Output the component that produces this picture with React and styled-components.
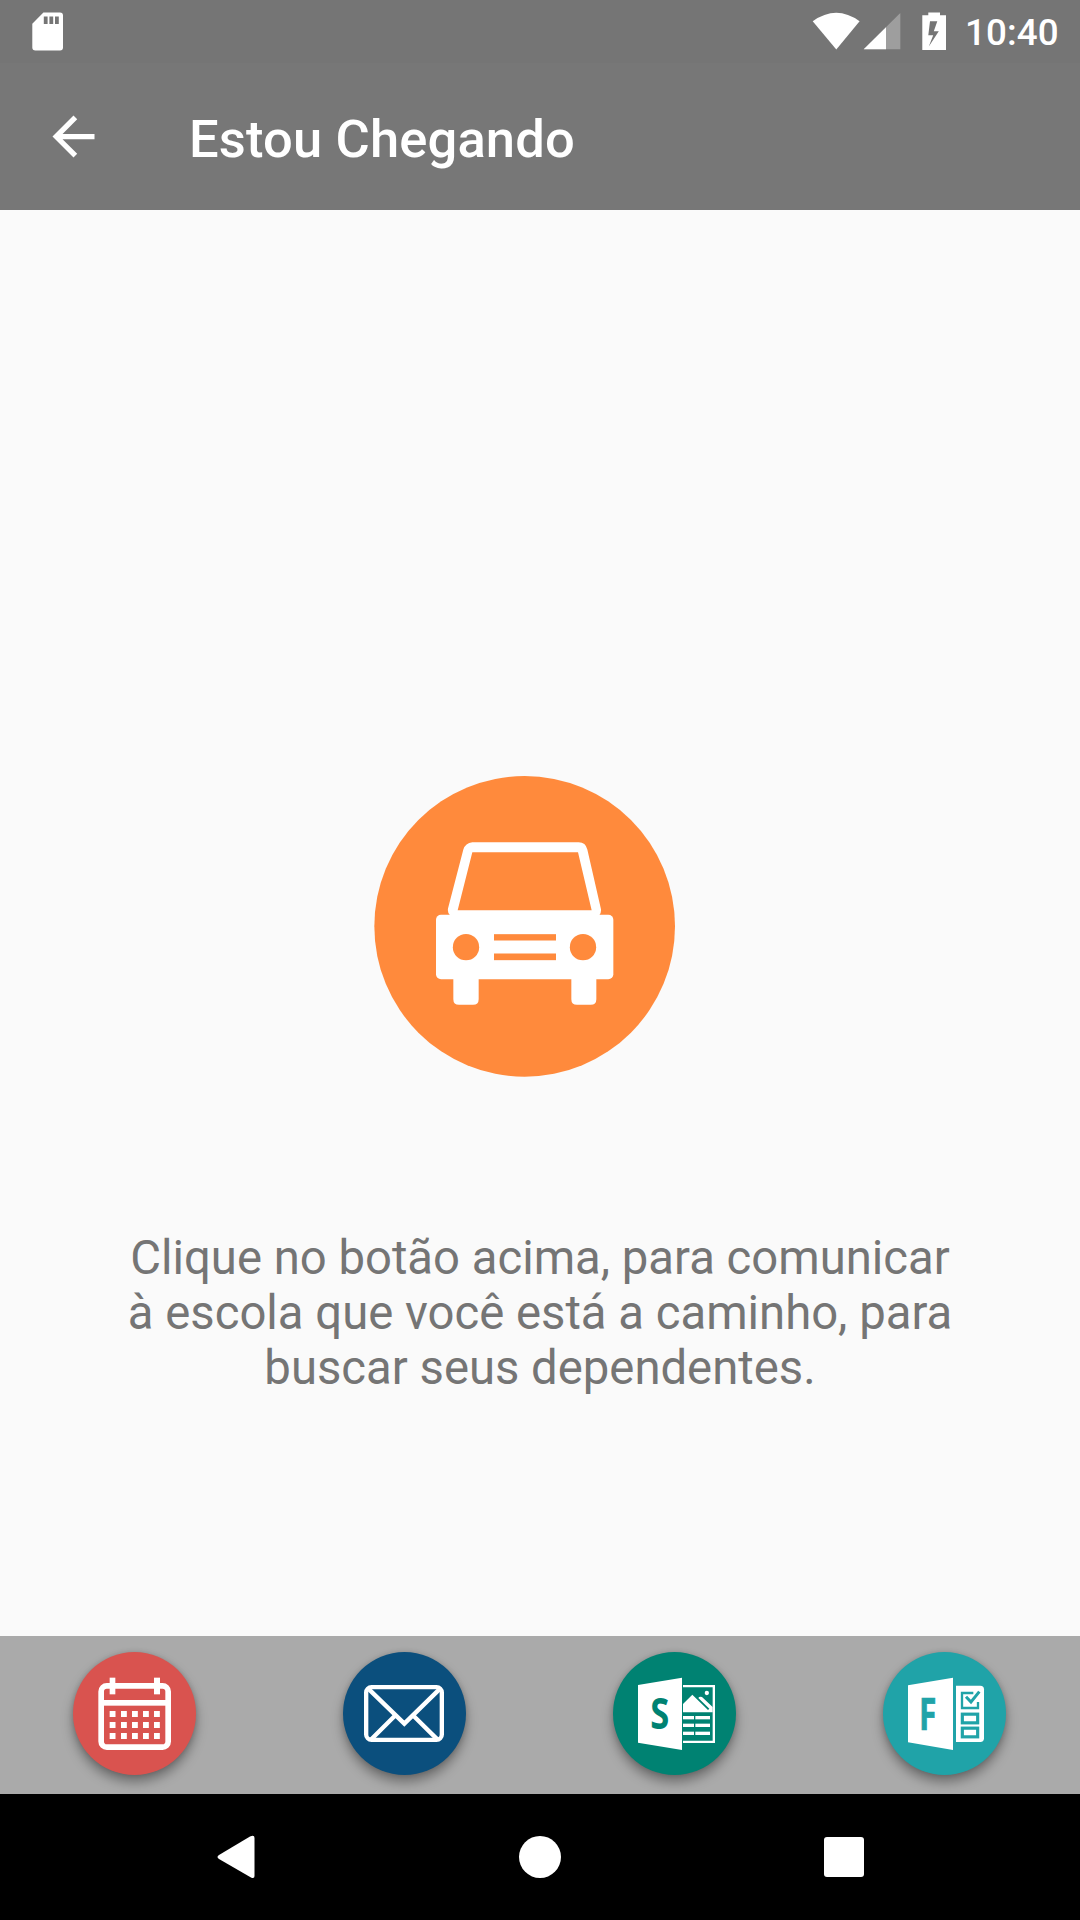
import React from "react";
import styled, { createGlobalStyle } from "styled-components";

const GlobalStyle = createGlobalStyle`
  * { box-sizing: border-box; }
  body {
    margin: 0;
    background: #fafafa;
    font-family: Roboto, "Noto Sans", sans-serif;
  }
  button {
    border: 0;
    padding: 0;
    background: none;
    font: inherit;
    cursor: pointer;
  }
  svg { display: block; flex: none; }
`;

const Screen = styled.div`
  display: flex;
  flex-direction: column;
  width: 1080px;
  height: 1920px;
  overflow: hidden;
  background: #fafafa;
`;

const StatusBar = styled.div`
  display: flex;
  justify-content: space-between;
  height: 63px;
  padding: 0 21px 0 32px;
  background: #757575;
`;

const StatusGroup = styled.div`
  display: flex;
  gap: 1px;
`;

const Clock = styled.time`
  width: 94px;
  padding-top: 11px;
  color: #fff;
  font-size: 36.75px;
  line-height: 43px;
  font-weight: 500;
  letter-spacing: 0.1px;
  white-space: nowrap;
`;

const Toolbar = styled.header`
  display: flex;
  align-items: center;
  gap: 84px;
  height: 147px;
  padding-left: 42px;
  background: #777;
`;

const Title = styled.h1`
  margin: 0;
  padding-top: 4px;
  color: #fff;
  font-size: 52.5px;
  line-height: 62px;
  font-weight: 500;
  letter-spacing: 0.15px;
  white-space: nowrap;
`;

const Content = styled.main`
  display: flex;
  flex: 1;
  flex-direction: column;
  align-items: center;
  padding-top: 566px;
`;

const CarButton = styled.button`
  width: 302px;
  height: 301px;
  margin-right: 30px;
`;

const Message = styled.p`
  width: 862px;
  margin: 154px 0 0;
  color: #757575;
  font-size: 47.25px;
  line-height: 55px;
  text-align: center;
`;

const Shortcuts = styled.nav`
  display: grid;
  grid-template-columns: repeat(4, 270px);
  justify-items: center;
  height: 158px;
  padding: 16px 0 0;
  background: #aaa;
  overflow: hidden;
`;

const ShortcutButton = styled.button`
  width: 123px;
  height: 123px;
  margin-right: 1px;
  border-radius: 50%;
  background: ${(p) => p.$color};
  box-shadow: 0 7px 12px rgba(0, 0, 0, 0.36), 0 0 5px rgba(0, 0, 0, 0.14);
`;

const NavigationBar = styled.div`
  display: flex;
  justify-content: center;
  gap: 262px;
  height: 126px;
  background: #000;
`;

const NavButton = styled.button`
  width: 42px;
  height: 126px;
  display: flex;
  align-items: center;
`;

const SdCard = () => (
  <svg width="32" height="63" viewBox="0 0 32 63" fill="#fff">
    <path fillRule="evenodd" d="M11.4 12.6H28Q31 12.6 31 15.6V47.6Q31 50.6 28 50.6H3.4Q.3 50.6 .3 47.6V23.8ZM11.8 16.6V24H15.6V16.6ZM17.4 16.6V24H21.2V16.6ZM23 16.6V24H26.8V16.6Z" />
  </svg>
);

const StatusIcons = () => (
  <svg width="152" height="63" viewBox="812 0 152 63" fill="#fff">
    <path d="M812.7 21.3Q836.3 4.3 859.6 21.3L836.3 49.6Z" />
    <path d="M900.3 13V49.3H863.7Z" opacity=".3" />
    <path d="M886 27.2V49.3H863.7Z" />
    <path fillRule="evenodd" d="M928.3 12.4H940V15.3H946V50H922.3V15.3H928.3ZM930 21.3L928.3 35.2H933.2L928.8 46.4L938.8 31.2H933.8L937.3 21.3Z" />
  </svg>
);

const BackArrow = () => (
  <svg width="63" height="63" viewBox="0 0 24 24" fill="#fff">
    <path d="M20 11H7.83l5.59-5.59L12 4l-8 8 8 8 1.41-1.41L7.83 13H20v-2z" />
  </svg>
);

const Car = () => (
  <svg width="302" height="301" viewBox="42 47.500 906 903">
    <circle cx="494" cy="498.500" r="451" fill="#ff8a3c" />
    <g fill="#fff">
      <path fillRule="evenodd" d="M337 246H656Q677 246 682 268L723 447Q724 458 718 465H270Q262 458 264 445L310 268Q316 248 337 246ZM337 276L293 450H695L654 276Z" />
      <rect x="228" y="464" width="532" height="193" rx="15" />
      <path d="M280 650H356V717Q356 734 339 734H297Q280 734 280 717ZM634 650H709V717Q709 734 692 734H651Q634 734 634 717Z" />
    </g>
    <g fill="#ff8a3c">
      <circle cx="318" cy="561" r="39.500" />
      <circle cx="669" cy="561" r="39.500" />
      <rect x="402" y="522" width="186" height="19" />
      <rect x="402" y="580" width="186" height="20" />
    </g>
  </svg>
);

const GlyphFrame = ({ children }) => (
  <svg width="123" height="123" viewBox="39 81 369 369">{children}</svg>
);

const CalendarGlyph = () => (
  <GlyphFrame>
    <rect x="123.500" y="182.500" width="201" height="184" rx="17" fill="none" stroke="#fff" strokeWidth="17" />
    <g fill="#fff">
      <rect x="125" y="225" width="200" height="17" />
      <rect x="149" y="158" width="17" height="50" />
      <rect x="282" y="158" width="18" height="50" />
      {[258, 291, 324].map((y) =>
        [149, 183, 216, 249, 282].map((x) => (
          <rect key={`${x}-${y}`} x={x} y={y} width="17.500" height="18" />
        ))
      )}
    </g>
  </GlyphFrame>
);

const MailGlyph = () => (
  <GlyphFrame>
    <g fill="none" stroke="#fff" strokeWidth="13">
      <rect x="108.500" y="186.500" width="227" height="158" rx="16" />
      <path d="M117 193L223 296L328 193M194 273L124 343M251 273L322 343" />
    </g>
  </GlyphFrame>
);

const StudyGlyph = () => (
  <GlyphFrame>
    <path d="M114 180L246 158V375L114 353Z" fill="#fff" />
    <text transform="translate(151 313) scale(.79 1)" fill="#008272" fontFamily="Open Sans, sans-serif" fontWeight="700" fontSize="131">S</text>
    <path d="M249 183.500H341.500V350.500H249" fill="none" stroke="#fff" strokeWidth="7" />
    <g fill="#fff">
      <circle cx="320.500" cy="204" r="6.500" />
      <path d="M249 237L277 209L324 255L328 251L295 219Q298 213 306 216L338 246V262H249Z" />
      {[273, 296, 320].map((y) => (
        <React.Fragment key={y}>
          <rect x="249" y={y} width="33" height="10" />
          <rect x="286" y={y} width="44" height="10" />
        </React.Fragment>
      ))}
    </g>
  </GlyphFrame>
);

const FormGlyph = () => (
  <GlyphFrame>
    <path d="M114 181L249 158V375L114 352Z" fill="#fff" />
    <text transform="translate(147 315) scale(.7 1)" fill="#20a3a8" stroke="#20a3a8" strokeWidth="2" fontFamily="Open Sans, sans-serif" fontWeight="700" fontSize="136">F</text>
    <path d="M258 182H331Q342 182 342 193V340Q342 351 331 351H258Z" fill="#fff" />
    <g fill="none" stroke="#20a3a8">
      <path d="M310 204H276V249H324V231" strokeWidth="7" />
      <path d="M288 215L303 231L328 200" strokeWidth="9" />
      <rect x="277" y="267.500" width="46" height="26" strokeWidth="9.500" />
      <rect x="277" y="309.500" width="46" height="26" strokeWidth="9.500" />
    </g>
  </GlyphFrame>
);

const shortcuts = [
  { name: "Calendário", color: "#d9534f", Glyph: CalendarGlyph },
  { name: "Mensagens", color: "#0b4f7d", Glyph: MailGlyph },
  { name: "Estudos", color: "#008272", Glyph: StudyGlyph },
  { name: "Formulários", color: "#20a3a8", Glyph: FormGlyph },
];

export default function App() {
  return (
    <>
      <GlobalStyle />
      <Screen>
        <StatusBar>
          <SdCard />
          <StatusGroup>
            <StatusIcons />
            <Clock>10:40</Clock>
          </StatusGroup>
        </StatusBar>
        <Toolbar>
          <button>
            <BackArrow />
          </button>
          <Title>Estou Chegando</Title>
        </Toolbar>
        <Content>
          <CarButton>
            <Car />
          </CarButton>
          <Message>
            Clique no botão acima, para comunicar
            <br />
            à escola que você está a caminho, para
            <br />
            buscar seus dependentes.
          </Message>
        </Content>
        <Shortcuts>
          {shortcuts.map(({ name, color, Glyph }) => (
            <ShortcutButton key={name} $color={color}>
              <Glyph />
            </ShortcutButton>
          ))}
        </Shortcuts>
        <NavigationBar>
          <NavButton>
            <svg width="42" height="44" viewBox="-2 0 42 44" fill="#fff">
              <path d="M2 20L33 1.500Q37.500 -.500 37.500 3V41Q37.500 44 34 42.500L2 24Q-1 22 2 20Z" />
            </svg>
          </NavButton>
          <NavButton>
            <svg width="42" height="42" viewBox="0 0 42 42" fill="#fff">
              <circle cx="21" cy="21" r="21" />
            </svg>
          </NavButton>
          <NavButton>
            <svg width="42" height="42" viewBox="0 0 42 42" fill="#fff">
              <rect x="1" y="1" width="40" height="40" rx="3" />
            </svg>
          </NavButton>
        </NavigationBar>
      </Screen>
    </>
  );
}
